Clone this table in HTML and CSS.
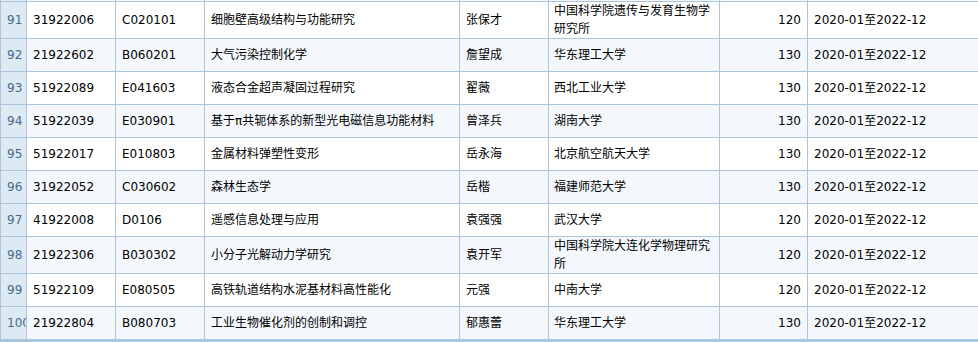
FILE: index.html
```html
<!DOCTYPE html>
<html lang="zh-CN">
<head>
<meta charset="utf-8">
<title>项目列表</title>
<link rel="stylesheet" href="styles.css">
</head>
<body>
<div class="grid">
  <table class="datagrid">
    <colgroup>
      <col class="c-rn"><col class="c-id"><col class="c-code"><col class="c-title"><col class="c-person"><col class="c-org"><col class="c-amt"><col class="c-date">
    </colgroup>
    <tbody>
      <tr class="stub alt"><td class="rn"></td><td></td><td></td><td></td><td></td><td></td><td></td><td></td></tr>
      <tr class="tall"><td class="rn">91</td><td>31922006</td><td>C020101</td><td>细胞壁高级结构与功能研究</td><td>张保才</td><td class="org">中国科学院遗传与发育生物学研究所</td><td class="amt">120</td><td>2020-01至2022-12</td></tr>
      <tr class="alt"><td class="rn">92</td><td>21922602</td><td>B060201</td><td>大气污染控制化学</td><td>詹望成</td><td class="org">华东理工大学</td><td class="amt">130</td><td>2020-01至2022-12</td></tr>
      <tr><td class="rn">93</td><td>51922089</td><td>E041603</td><td>液态合金超声凝固过程研究</td><td>翟薇</td><td class="org">西北工业大学</td><td class="amt">130</td><td>2020-01至2022-12</td></tr>
      <tr class="alt"><td class="rn">94</td><td>51922039</td><td>E030901</td><td>基于π共轭体系的新型光电磁信息功能材料</td><td>曾泽兵</td><td class="org">湖南大学</td><td class="amt">130</td><td>2020-01至2022-12</td></tr>
      <tr><td class="rn">95</td><td>51922017</td><td>E010803</td><td>金属材料弹塑性变形</td><td>岳永海</td><td class="org">北京航空航天大学</td><td class="amt">130</td><td>2020-01至2022-12</td></tr>
      <tr class="alt"><td class="rn">96</td><td>31922052</td><td>C030602</td><td>森林生态学</td><td>岳楷</td><td class="org">福建师范大学</td><td class="amt">130</td><td>2020-01至2022-12</td></tr>
      <tr><td class="rn">97</td><td>41922008</td><td>D0106</td><td>遥感信息处理与应用</td><td>袁强强</td><td class="org">武汉大学</td><td class="amt">120</td><td>2020-01至2022-12</td></tr>
      <tr class="alt tall"><td class="rn">98</td><td>21922306</td><td>B030302</td><td>小分子光解动力学研究</td><td>袁开军</td><td class="org">中国科学院大连化学物理研究所</td><td class="amt">120</td><td>2020-01至2022-12</td></tr>
      <tr><td class="rn">99</td><td>51922109</td><td>E080505</td><td>高铁轨道结构水泥基材料高性能化</td><td>元强</td><td class="org">中南大学</td><td class="amt">120</td><td>2020-01至2022-12</td></tr>
      <tr class="alt"><td class="rn">100</td><td>21922804</td><td>B080703</td><td>工业生物催化剂的创制和调控</td><td>郁惠蕾</td><td class="org">华东理工大学</td><td class="amt">130</td><td>2020-01至2022-12</td></tr>
    </tbody>
  </table>
  <div class="grid-foot"></div>
</div>
</body>
</html>
```

FILE: styles.css
```css
html, body {
  margin: 0;
  padding: 0;
  background: #ffffff;
}

body {
  width: 978px;
  height: 342px;
  overflow: hidden;
  font-family: "DejaVu Sans", "Noto Sans CJK SC", sans-serif;
  font-size: 12px;
  color: #000000;
}

.grid {
  display: flex;
  flex-direction: column;
  width: 978px;
  overflow: hidden;
}

.datagrid {
  border-collapse: collapse;
  table-layout: fixed;
  width: 1100px;
}

.c-rn { width: 26px; }
.c-id { width: 89px; }
.c-code { width: 89px; }
.c-title { width: 255px; }
.c-person { width: 89px; }
.c-org { width: 171px; }
.c-amt { width: 88px; }
.c-date { width: 293px; }

.datagrid td {
  height: 32px;
  padding: 0 5px 0 6px;
  border: 1px solid #abc6dc;
  line-height: 18px;
  vertical-align: middle;
  white-space: nowrap;
  overflow: hidden;
  background: #ffffff;
}

.datagrid tr.alt td {
  background: #f4f8fd;
}

.datagrid tr.tall td {
  height: 36px;
}

.datagrid tr.stub td {
  height: 1px;
  padding: 0;
  border-top: none;
  line-height: 1px;
}

.datagrid td.rn,
.datagrid tr.alt td.rn {
  background: #dde9f3;
  color: #466a8e;
  text-align: center;
  padding: 0 6px;
  text-overflow: clip;
}

.datagrid td.org {
  white-space: normal;
  word-break: break-all;
  padding-left: 5px;
}

.datagrid td.amt {
  text-align: right;
  padding-right: 6px;
}

.grid-foot {
  height: 3px;
  background: #a7c6e0;
}
```
